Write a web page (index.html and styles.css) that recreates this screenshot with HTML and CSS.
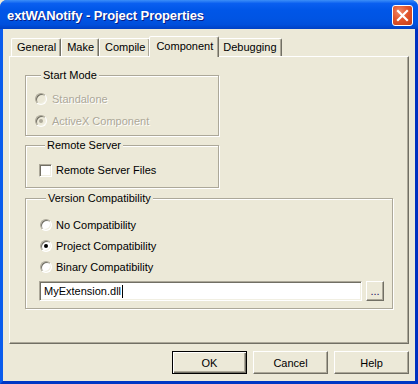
FILE: index.html
```html
<!DOCTYPE html>
<html lang="en">
<head>
  <meta charset="UTF-8">
  <title>extWANotify - Project Properties</title>
  <link rel="stylesheet" href="styles.css">
</head>
<body>
  <div class="window">
    <div class="titlebar">
      <span class="title">extWANotify - Project Properties</span>
      <button class="close" title="Close">
        <svg width="13" height="13" viewBox="0 0 13 13">
          <path d="M2 2 L11 11 M11 2 L2 11" stroke="#fff" stroke-width="2.2" stroke-linecap="square"/>
        </svg>
      </button>
    </div>

    <div class="client">
      <div class="tabs">
        <div class="tab">General</div>
        <div class="tab">Make</div>
        <div class="tab">Compile</div>
        <div class="tab active">Component</div>
        <div class="tab">Debugging</div>
      </div>

      <div class="panel">
        <!-- Start Mode -->
        <div class="group start-mode">
          <div class="group-title">Start Mode</div>
          <div class="options">
            <label class="option disabled"><span class="radio"></span>Standalone</label>
            <label class="option disabled"><span class="radio checked"></span>ActiveX Component</label>
          </div>
        </div>

        <!-- Remote Server -->
        <div class="group remote-server">
          <div class="group-title">Remote Server</div>
          <div class="options">
            <label class="option"><span class="checkbox"></span>Remote Server Files</label>
          </div>
        </div>

        <!-- Version Compatibility -->
        <div class="group version">
          <div class="group-title">Version Compatibility</div>
          <div class="options">
            <label class="option"><span class="radio"></span>No Compatibility</label>
            <label class="option"><span class="radio checked"></span>Project Compatibility</label>
            <label class="option"><span class="radio"></span>Binary Compatibility</label>
          </div>
          <div class="file-row">
            <div class="textbox">MyExtension.dll<span class="caret"></span></div>
            <button class="browse">...</button>
          </div>
        </div>
      </div>

      <div class="buttons">
        <button class="btn default">OK</button>
        <button class="btn">Cancel</button>
        <button class="btn">Help</button>
      </div>
    </div>
  </div>
</body>
</html>
```

FILE: styles.css
```css
* {
  margin: 0;
  padding: 0;
  box-sizing: border-box;
}

body {
  font-family: 'Liberation Sans', Arial, sans-serif;
  font-size: 11px;
  color: #000;
  background-color: #ece9d8;
}

.window {
  width: 418px;
  height: 384px;
  display: flex;
  flex-direction: column;
  background-color: #0055e5;
  border-radius: 7px 7px 0 0;
  overflow: hidden;
}

/* barra de titulo */
.titlebar {
  height: 29px;
  display: flex;
  align-items: center;
  justify-content: space-between;
  padding: 0 5px 0 7px;
  background: linear-gradient(to bottom, #3c8ef8 0%, #0a5ff0 12%, #0056e8 35%, #0054e3 65%, #004fdc 85%, #0040c4 100%);
}

.title {
  color: #fff;
  font-weight: bold;
  font-size: 13px;
  letter-spacing: -0.1px;
  text-shadow: 1px 1px #0a1d84;
  margin-top: 1px;
}

.close {
  width: 21px;
  height: 21px;
  border: 1px solid #fff;
  border-radius: 3px;
  background: radial-gradient(circle at 35% 30%, #f08a6a 0%, #e2552c 45%, #c43c16 100%);
  display: flex;
  align-items: center;
  justify-content: center;
  margin-top: 1px;
}

.client {
  flex: 1;
  display: flex;
  flex-direction: column;
  background-color: #ece9d8;
  border: 3px solid;
  border-top: 0;
  border-color: #0055e5 #0031c0 #0036c4 #0a5ced;
}

/* abas */
.tabs {
  height: 27px;
  display: flex;
  align-items: flex-end;
  padding-left: 8px;
}

.tab {
  height: 18px;
  line-height: 17px;
  padding: 0 4px 0 5px;
  border: 1px solid;
  border-bottom: 0;
  border-color: #fff #716f64 transparent #fff;
  border-radius: 2px 2px 0 0;
  box-shadow: inset -1px 0 #aca899;
  white-space: nowrap;
}

.tab.active {
  height: 21px;
  line-height: 18px;
  margin: 0 -2px -1px -1px;
  padding: 0 5px 0 6px;
  position: relative;
  z-index: 1;
  background-color: #ece9d8;
}

.panel {
  height: 288px;
  margin: 0 6px 0 6px;
  padding: 18px 0 0 15px;
  border: 1px solid;
  border-color: #fff #716f64 #716f64 #fff;
  box-shadow: inset -1px -1px #aca899;
}

/* group box */
.group {
  border: 1px solid #aca899;
  box-shadow: inset 1px 1px #fff, 1px 1px #fff;
}

.group-title {
  width: max-content;
  margin: -7px 0 0 6px;
  padding: 0 2px;
  line-height: 13px;
  background-color: #ece9d8;
}

.start-mode {
  width: 194px;
  height: 61px;
  padding-left: 9px;
}

.start-mode .options {
  padding-top: 6px;
}

.remote-server {
  width: 194px;
  height: 43px;
  margin-top: 9px;
  padding-left: 13px;
}

.remote-server .options {
  padding-top: 7px;
}

.version {
  width: 368px;
  height: 111px;
  margin-top: 10px;
  padding-left: 14px;
}

.version .options {
  padding-top: 9px;
}

.option {
  height: 22px;
  display: flex;
  align-items: center;
  gap: 5px;
}

.version .option {
  height: 21px;
  gap: 4px;
}

.remote-server .option {
  gap: 4px;
}

.option.disabled {
  color: #aca899;
  text-shadow: 1px 1px #fff;
}

.radio {
  width: 12px;
  height: 12px;
  flex: none;
  border-radius: 50%;
  border: 1px solid;
  border-color: #aca899 #fff #fff #aca899;
  box-shadow: inset 1px 1px #716f64, inset -1px -1px #f1efe2;
  background-color: #fff;
  display: flex;
  align-items: center;
  justify-content: center;
}

.option.disabled .radio {
  background-color: #ece9d8;
}

.radio.checked::after {
  content: "";
  width: 4px;
  height: 4px;
  border-radius: 50%;
  background-color: #000;
}

.option.disabled .radio.checked::after {
  background-color: #aca899;
}

.checkbox {
  width: 13px;
  height: 13px;
  flex: none;
  border: 1px solid;
  border-color: #aca899 #fff #fff #aca899;
  box-shadow: inset 1px 1px #716f64, inset -1px -1px #f1efe2;
  background-color: #fff;
}

.file-row {
  display: flex;
  gap: 4px;
  margin: 4px 0 0 -1px;
}

.textbox {
  width: 323px;
  height: 20px;
  display: flex;
  align-items: center;
  padding-left: 4px;
  border: 1px solid;
  border-color: #aca899 #fff #fff #aca899;
  box-shadow: inset 1px 1px #716f64, inset -1px -1px #f1efe2;
  background-color: #fff;
}

.caret {
  width: 1px;
  height: 13px;
  margin-left: 1px;
  background-color: #000;
}

.browse {
  width: 18px;
  height: 20px;
  font: inherit;
  line-height: 14px;
  color: #1a1060;
  background-color: #ece9d8;
  border: 1px solid;
  border-color: #fff #716f64 #716f64 #fff;
  box-shadow: inset -1px -1px #aca899;
}

/* botoes */
.buttons {
  display: flex;
  justify-content: flex-end;
  gap: 6px;
  margin-top: 7px;
  padding-right: 6px;
}

.btn {
  width: 75px;
  height: 23px;
  font: inherit;
  color: #000;
  background-color: #ece9d8;
  border: 1px solid;
  border-color: #fff #716f64 #716f64 #fff;
  box-shadow: inset -1px -1px #aca899;
}

.btn.default {
  border-color: #000;
  box-shadow: inset 1px 1px #fff, inset -1px -1px #716f64, inset -2px -2px #aca899;
}
```
